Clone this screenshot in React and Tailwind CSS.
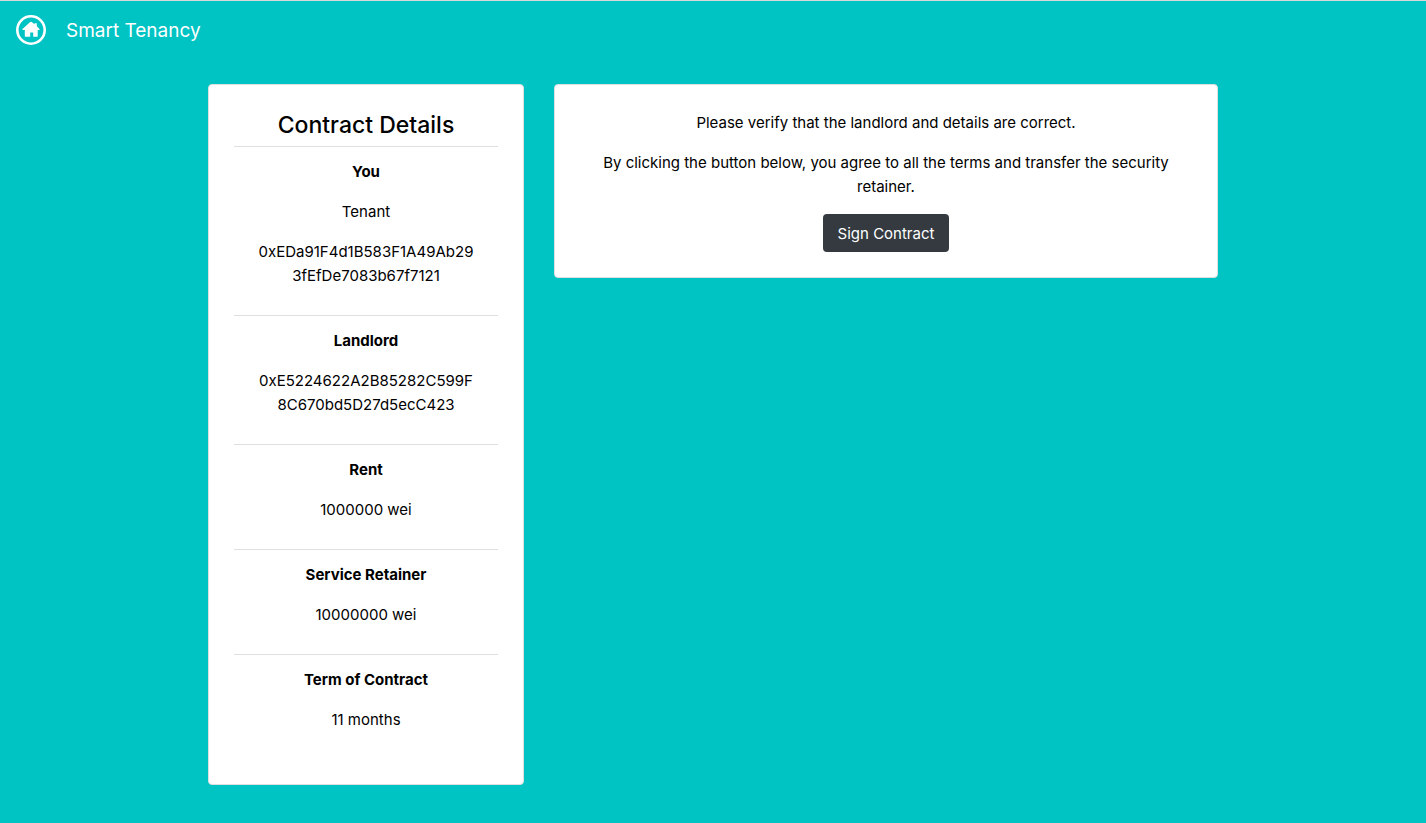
const sections = [
  { title: "You", lines: ["Tenant", "0xEDa91F4d1B583F1A49Ab293fEfDe7083b67f7121"] },
  { title: "Landlord", lines: ["0xE5224622A2B85282C599F8C670bd5D27d5ecC423"] },
  { title: "Rent", lines: ["1000000 wei"] },
  { title: "Service Retainer", lines: ["10000000 wei"] },
  { title: "Term of Contract", lines: ["11 months"] },
];

function HomeIcon() {
  return (
    <svg viewBox="0 0 30 30" className="size-[30px]" aria-hidden="true">
      <circle cx="15" cy="15" r="13.7" fill="none" stroke="currentColor" strokeWidth="2.6" />
      <path
        d="M14.2 7q.8-.7 1.6 0l2.7 2.3V8.3h2.300v3l2.700 2.600q.6 1.100-.5 1.100h-1.300v5.900q0 .9-.9.9h-3.600v-4.200h-3v4.200H9.700q-.9 0-.9-.9V15H7q-1.100 0-.5-1.100z"
        fill="currentColor"
      />
    </svg>
  );
}

function Card({ className = "", children }) {
  return (
    <section className={`rounded-sm border border-[#dfdfdf] bg-white p-[25px] text-center ${className}`}>
      {children}
    </section>
  );
}

function Detail({ title, lines }) {
  return (
    <div className="flex flex-col gap-4 border-t border-[#dfdfdf] px-[22px] pt-[13px] pb-[27px]">
      <h3 className="font-bold">{title}</h3>
      {lines.map((line) => (
        <p key={line} className="break-all">{line}</p>
      ))}
    </div>
  );
}

export default function App() {
  return (
    <div className="min-h-screen border-t border-[#d8d8d8] bg-[#00c3c3] pb-9 font-['Inter',sans-serif] text-[15px] leading-6 text-black">
      <header className="flex px-4 pt-3.5">
        <a href="#home" className="flex items-center gap-5 text-[19px] text-white">
          <HomeIcon />
          <span className="pt-0.5 leading-7">Smart Tenancy</span>
        </a>
      </header>
      <main className="mx-auto mt-[39px] grid max-w-[1040px] items-start gap-[30px] px-[15px] md:grid-cols-[316fr_664fr]">
        <Card>
          <h2 className="mb-1.5 text-[23px] leading-[30px] font-medium">Contract Details</h2>
          {sections.map((section) => (
            <Detail key={section.title} {...section} />
          ))}
        </Card>
        <Card className="flex flex-col items-center gap-[15px]">
          <div className="flex flex-col gap-4 pt-px">
            <p>Please verify that the landlord and details are correct.</p>
            <p>
              By clicking the button below, you agree to all the terms and transfer the security retainer.
            </p>
          </div>
          <button type="button" className="rounded-sm bg-[#343a40] px-[15px] pt-2 pb-1.5 text-white">
            Sign Contract
          </button>
        </Card>
      </main>
    </div>
  );
}
